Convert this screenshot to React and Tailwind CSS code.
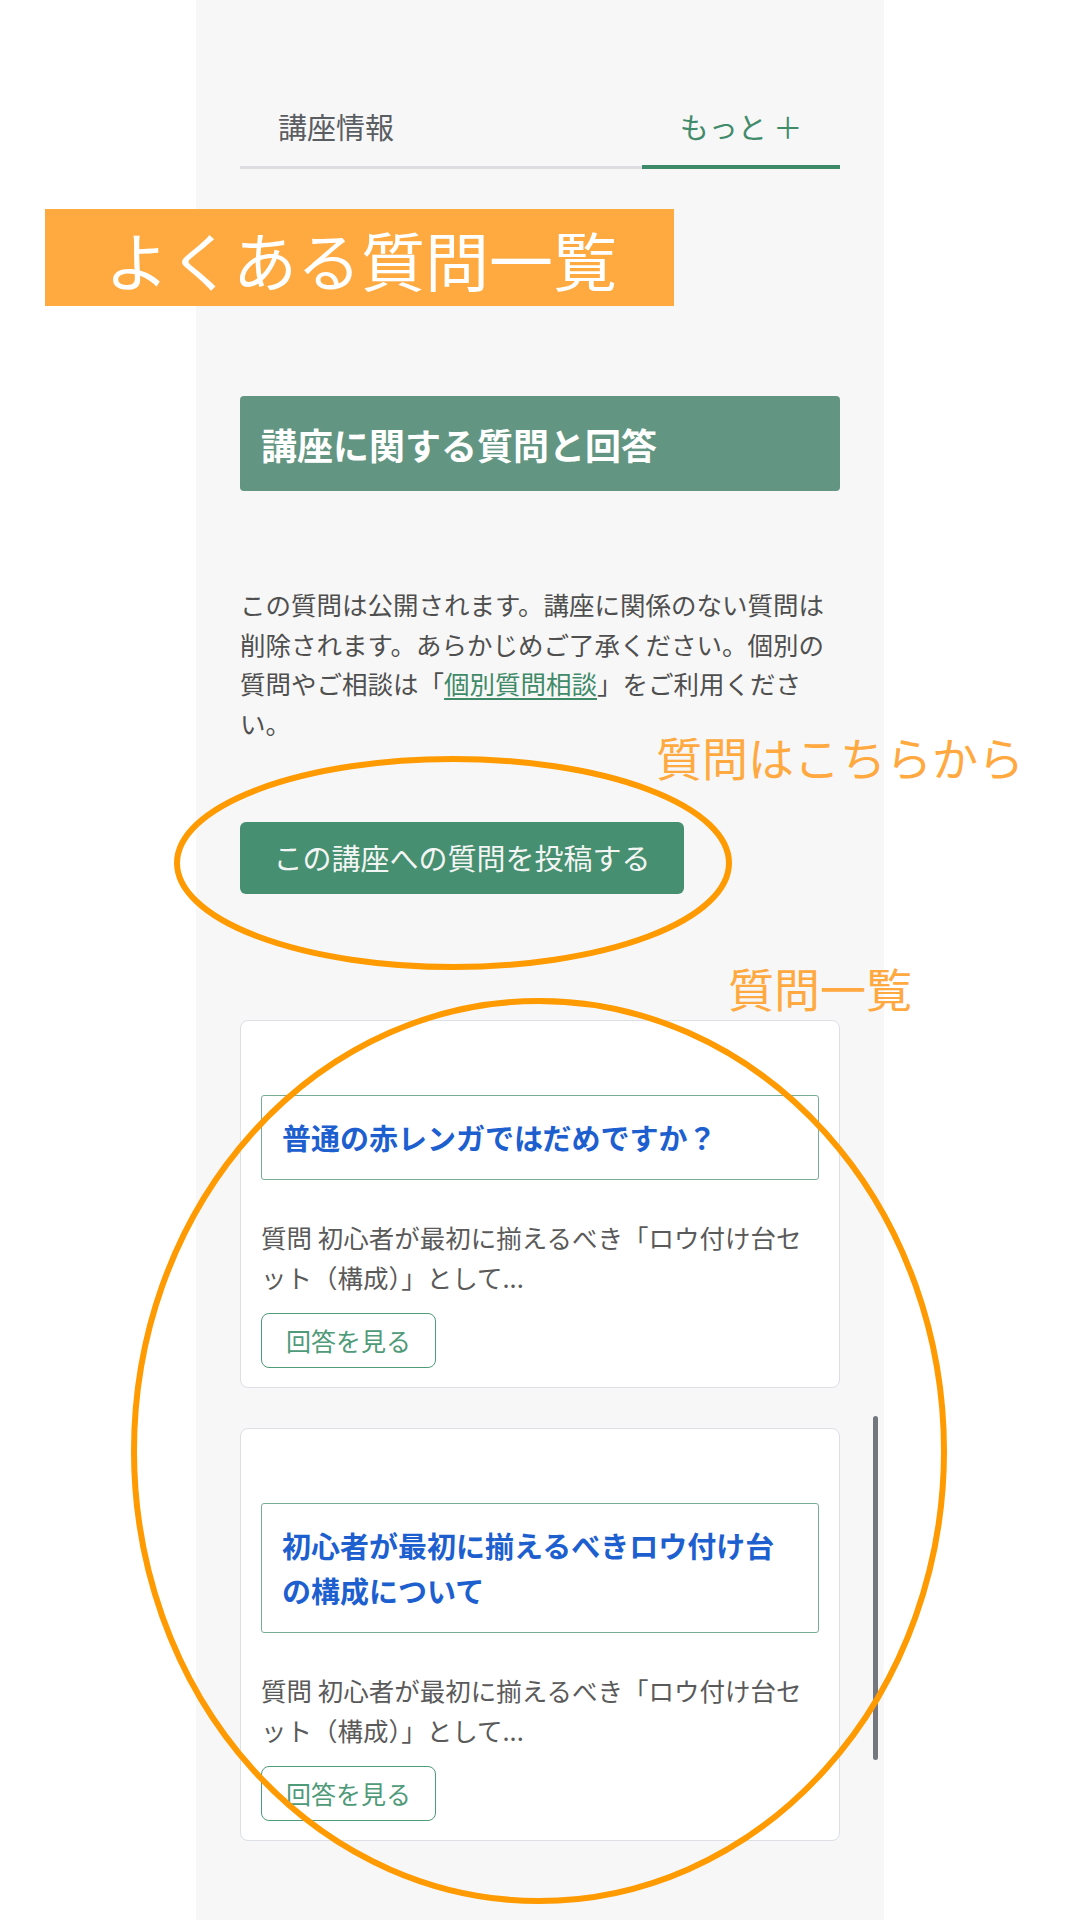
import { Fragment } from 'react'

const questions = [
  {
    id: 1,
    title: '普通の赤レンガではだめですか？',
    excerpt: '質問 初心者が最初に揃えるべき「ロウ付け台セット（構成）」として...',
  },
  {
    id: 2,
    title: '初心者が最初に揃えるべきロウ付け台の構成について',
    excerpt: '質問 初心者が最初に揃えるべき「ロウ付け台セット（構成）」として...',
  },
]

function Tabs() {
  return (
    <div className="flex items-end">
      <div className="flex-1 pl-[38px] pb-[20px] border-b-[3px] border-[#dcdee1]">
        <span className="block text-[29px] leading-[40px] text-[#5a5d62]">講座情報</span>
      </div>
      <div className="w-[198px] pb-[19px] border-b-4 border-[#3c8a68] text-center">
        <span className="block text-[29px] leading-[40px] text-[#418b6b]">もっと ＋</span>
      </div>
    </div>
  )
}

function QuestionCard({ q }) {
  return (
    <div className="bg-white border border-[#dcdfe3] rounded-[8px] px-[20px] pt-[74px] pb-[19px]">
      <div className="border border-[#78ad95] rounded-[3px] pl-[20px] pr-[16px] py-[19px]">
        <p className="text-[29px] leading-[45px] font-bold text-[#1e5fcf]">{q.title}</p>
      </div>
      <p className="mt-[37px] text-[25.5px] leading-[40px] text-[#5a5a5a]">{q.excerpt}</p>
      <button className="mt-[16px] w-[175px] h-[55px] border-[1.5px] border-[#4f9a79] rounded-[8px] text-[25px] text-[#4f9a79] bg-white">
        回答を見る
      </button>
    </div>
  )
}

export default function App() {
  return (
    <div className="relative w-[1080px] h-[1920px] bg-white overflow-hidden font-['Noto_Sans_CJK_JP',sans-serif]">
      <div className="relative w-[688px] min-h-[1920px] mx-auto bg-[#f7f7f7] px-[44px] pt-[106px] pb-[60px]">
        <Tabs />

        {/* 見出し */}
        <div className="mt-[227px] h-[95px] rounded-[4px] bg-[#629682] flex items-center pl-[21px]">
          <h2 className="text-[36px] font-bold text-white">講座に関する質問と回答</h2>
        </div>

        <p className="mt-[93px] text-[25.5px] leading-[39.5px] text-[#4f4f4f]">
          この質問は公開されます。講座に関係のない質問は削除されます。あらかじめご了承ください。個別の質問やご相談は「<a href="#" className="text-[#3f8a68] underline underline-offset-4">個別質問相談</a>」をご利用ください。
        </p>

        <button className="mt-[80px] w-[444px] h-[72px] rounded-[6px] bg-[#468f70] text-[29px] text-[#f2f5f3] flex items-center justify-center">
          この講座への質問を投稿する
        </button>

        <div className="mt-[126px] flex flex-col gap-[40px]">
          {questions.map(q => (
            <Fragment key={q.id}>
              <QuestionCard q={q} />
            </Fragment>
          ))}
        </div>

        {/* スクロールバー */}
        <div className="absolute left-[677px] top-[1416px] w-[5px] h-[344px] rounded-full bg-[#74777e]" />
      </div>

      {/* 注釈 */}
      <div className="absolute left-[45px] top-[209px] w-[629px] h-[97px] bg-[#ffaa40] flex items-center pl-[60px]">
        <span className="text-[64px] leading-none text-white">よくある質問一覧</span>
      </div>
      <span className="absolute left-[656px] top-[733px] text-[46px] leading-none text-[#ffa940]">質問はこちらから</span>
      <span className="absolute left-[728px] top-[964px] text-[46px] leading-none text-[#ffa940]">質問一覧</span>

      <svg className="absolute inset-0 pointer-events-none" width="1080" height="1920" viewBox="0 0 1080 1920" fill="none">
        <ellipse cx="453" cy="863" rx="276" ry="104" stroke="#ff9a00" strokeWidth="6" />
        <ellipse cx="539" cy="1451" rx="405" ry="450" stroke="#ff9a00" strokeWidth="6" />
      </svg>
    </div>
  )
}
